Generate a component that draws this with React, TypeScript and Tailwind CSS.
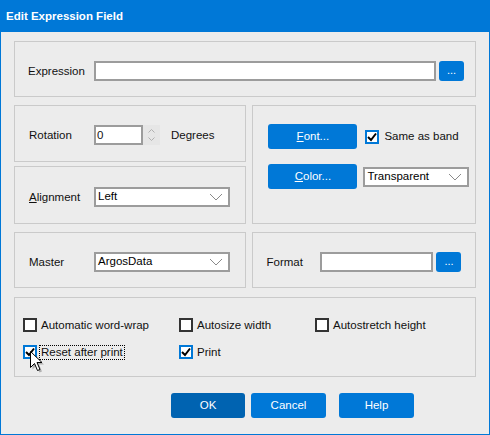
import type { ReactNode } from 'react'

const font = "font-['Liberation_Sans',Arial,sans-serif]"

const Panel = ({ className, children }: { className: string; children: ReactNode }) => (
  <div className={`border border-[#cacaca] ${className}`}>{children}</div>
)

const Chevron = () => (
  <svg width="14" height="8" viewBox="0 0 14 8" className="mr-[5px]">
    <path d="M1 1 L7 7 L13 1" fill="none" stroke="#8a8a8a" strokeWidth="1" />
  </svg>
)

const Select = ({ value, width }: { value: string; width: string }) => (
  <div className={`${width} h-[20px] bg-white border-2 border-[#9c9c9c] flex items-center justify-between pl-[2px]`}>
    <span className="text-[11.5px] text-black leading-none">{value}</span>
    <Chevron />
  </div>
)

const DotsButton = () => (
  <div className="w-[25px] h-[20px] rounded-[3px] bg-[#0078d7] flex items-center justify-center text-white text-[11px] leading-none pb-[2px]">
    ...
  </div>
)

const BlueButton = ({ children, className }: { children: ReactNode; className: string }) => (
  <div className={`h-[25px] rounded-[3px] flex items-center justify-center text-white text-[11.5px] ${className}`}>
    {children}
  </div>
)

const Check = ({ checked }: { checked?: boolean }) =>
  checked ? (
    <div className="w-[14px] h-[14px] border-2 border-[#0078d7] bg-white flex items-center justify-center">
      <svg width="10" height="10" viewBox="0 0 10 10">
        <path d="M1 5 L4 8 L9 1.5" fill="none" stroke="#000" strokeWidth="2" />
      </svg>
    </div>
  ) : (
    <div className="w-[14px] h-[14px] border-2 border-[#333] bg-white" />
  )

const CheckItem = ({ label, checked, width, focused }: { label: string; checked?: boolean; width: string; focused?: boolean }) => (
  <div className={`${width} flex items-center gap-[3px]`}>
    <Check checked={checked} />
    <span
      className={`text-[11.5px] text-[#111] leading-[13px] px-[1px] ${focused ? 'outline outline-1 outline-dotted outline-black' : ''}`}
    >
      {label}
    </span>
  </div>
)

export default function App() {
  return (
    <div className={`relative w-[490px] h-[435px] bg-[#ececec] border-x border-b border-[#0078d7] flex flex-col ${font} text-[#111]`}>
      {/* title bar */}
      <div className="h-[32px] shrink-0 bg-[#0078d7] flex items-center pl-[6px] -mx-px">
        <span className="text-white font-bold text-[11.5px] pt-[1px]">Edit Expression Field</span>
      </div>

      <div className="flex flex-col px-[13px] pt-[9px]">
        {/* expression */}
        <Panel className="h-[56px] flex items-start pt-[19px] pl-[13px]">
          <span className="w-[66px] text-[11.5px] leading-[20px]">Expression</span>
          <div className="w-[342px] h-[20px] bg-white border-2 border-[#9c9c9c]" />
          <div className="ml-[3px]">
            <DotsButton />
          </div>
        </Panel>

        <div className="mt-[8px] flex gap-[6px]">
          <div className="w-[234px] flex flex-col gap-[4px]">
            {/* rotation */}
            <Panel className="h-[57px] flex items-start pt-[19px] pl-[14px]">
              <span className="w-[65px] text-[11.5px] leading-[20px]">Rotation</span>
              <div className="w-[49px] h-[20px] bg-white border-2 border-[#9c9c9c] text-[11.5px] leading-[16px] pl-[1px]">0</div>
              <div className="w-[17px] h-[20px] bg-[#e6e6e6] flex flex-col items-center justify-center gap-[4px]">
                <svg width="7" height="4" viewBox="0 0 7 4">
                  <path d="M0.5 3.5 L3.5 0.5 L6.5 3.5" fill="none" stroke="#b0b0b0" strokeWidth="1" />
                </svg>
                <svg width="7" height="4" viewBox="0 0 7 4">
                  <path d="M0.5 0.5 L3.5 3.5 L6.5 0.5" fill="none" stroke="#b0b0b0" strokeWidth="1" />
                </svg>
              </div>
              <span className="ml-[11px] text-[11.5px] leading-[20px]">Degrees</span>
            </Panel>
            {/* alignment */}
            <Panel className="h-[58px] flex items-start pt-[20px] pl-[14px]">
              <span className="w-[65px] text-[11.5px] leading-[20px]">
                <span className="underline">A</span>lignment
              </span>
              <Select value="Left" width="w-[136px]" />
            </Panel>
          </div>

          {/* font / color */}
          <Panel className="w-[225px] h-[119px] flex flex-col pt-[18px] pl-[15px] gap-[15px]">
            <div className="flex items-center">
              <BlueButton className="w-[89px] bg-[#0078d7]">
                <span>
                  <span className="underline">F</span>ont...
                </span>
              </BlueButton>
              <div className="flex items-center gap-[5px] ml-[8px]">
                <Check checked />
                <span className="text-[11.5px]">Same as band</span>
              </div>
            </div>
            <div className="flex items-center">
              <BlueButton className="w-[89px] bg-[#0078d7]">
                <span>
                  <span className="underline">C</span>olor...
                </span>
              </BlueButton>
              <div className="ml-[6px]">
                <Select value="Transparent" width="w-[106px]" />
              </div>
            </div>
          </Panel>
        </div>

        <div className="mt-[8px] flex gap-[6px]">
          {/* master */}
          <Panel className="w-[234px] h-[56px] flex items-start pt-[19px] pl-[14px]">
            <span className="w-[65px] text-[11.5px] leading-[20px]">Master</span>
            <Select value="ArgosData" width="w-[136px]" />
          </Panel>
          {/* format */}
          <Panel className="w-[225px] h-[56px] flex items-start pt-[19px] pl-[13px]">
            <span className="w-[54px] text-[11.5px] leading-[20px]">Format</span>
            <div className="w-[113px] h-[20px] bg-white border-2 border-[#9c9c9c]" />
            <div className="ml-[3px]">
              <DotsButton />
            </div>
          </Panel>
        </div>

        {/* options */}
        <Panel className="mt-[9px] h-[80px] flex flex-col pt-[20px] pl-[8px] gap-[13px]">
          <div className="flex">
            <CheckItem label="Automatic word-wrap" width="w-[156px]" />
            <CheckItem label="Autosize width" width="w-[136px]" />
            <CheckItem label="Autostretch height" width="w-[150px]" />
          </div>
          <div className="flex">
            <CheckItem label="Reset after print" checked focused width="w-[156px]" />
            <CheckItem label="Print" checked width="w-[136px]" />
          </div>
        </Panel>

        {/* buttons */}
        <div className="mt-[16px] flex pl-[157px] gap-[6px]">
          <BlueButton className="w-[74px] bg-[#0063b1]">OK</BlueButton>
          <BlueButton className="w-[75px] bg-[#0078d7]">Cancel</BlueButton>
          <BlueButton className="w-[75px] bg-[#0078d7] ml-[7px]">Help</BlueButton>
        </div>
      </div>

      {/* mouse cursor */}
      <svg className="absolute left-[29px] top-[351px]" width="16" height="23" viewBox="0 0 16 23">
        <path d="M2.5 2.5 L2.5 18.5 L6.5 14.5 L9.5 21.5 L12 20.5 L9 13.5 L14 13.5 Z" fill="#000" opacity="0.25" />
        <path d="M0.5 0.5 L0.5 16.5 L4.5 12.5 L7.5 19.5 L10 18.5 L7 11.5 L12 11.5 Z" fill="#fff" stroke="#000" strokeWidth="1" />
      </svg>
    </div>
  )
}
